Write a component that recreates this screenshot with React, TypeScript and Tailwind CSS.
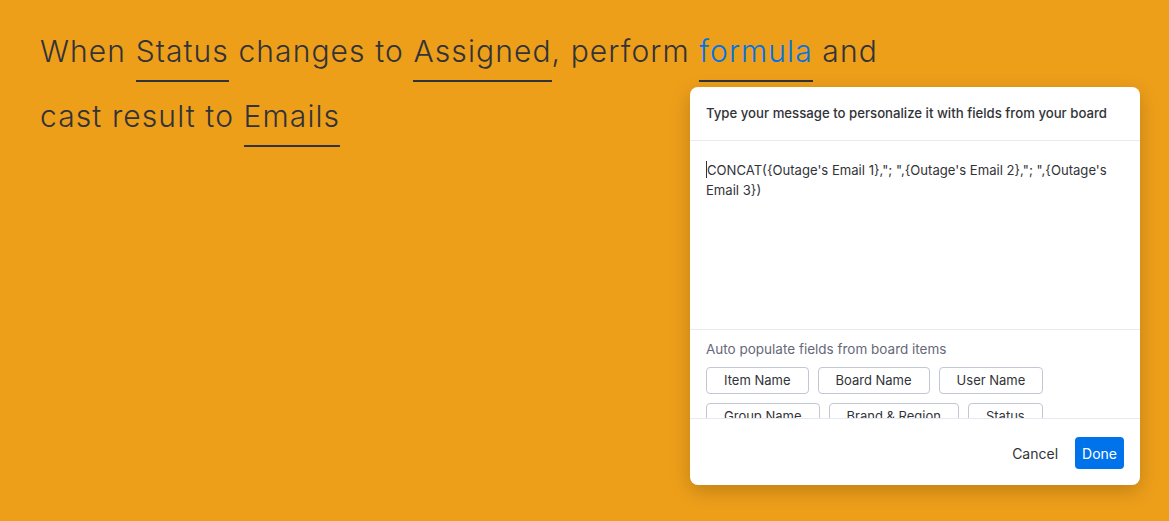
import React from "react";

const U = ({ children, blue }: { children: React.ReactNode; blue?: boolean }) => (
  <span
    className={`inline-block border-b-2 border-[#323338] pb-[9px] ${blue ? "text-[#0073ea]" : ""}`}
  >
    {children}
  </span>
);

const Chip = ({ label }: { label: string }) => (
  <button className="h-[27px] px-[17px] rounded-[4px] border border-[#c3c6d4] bg-white text-[13px] text-[#323338] leading-none whitespace-nowrap">
    {label}
  </button>
);

export default function App() {
  return (
    <div className="relative w-[1169px] h-[521px] bg-[#ee9f1a] overflow-hidden">
      <div
        className="pl-[40px] pt-[31px] text-[30px] font-light text-[#323338] tracking-[1.1px]"
        style={{ fontFamily: "Inter, 'Noto Sans', sans-serif" }}
      >
        <div className="leading-[40px] h-[65px] whitespace-nowrap">
          When <U>Status</U> changes to <U>Assigned</U>, perform <U blue>formula</U> and
        </div>
        <div className="leading-[40px] h-[63px] whitespace-nowrap">
          cast result to <U>Emails</U>
        </div>
      </div>

      <div
        className="absolute left-[690px] top-[87px] w-[450px] h-[398px] bg-white rounded-[8px] shadow-[0_6px_20px_rgba(0,0,0,0.2)] flex flex-col overflow-hidden"
        style={{ fontFamily: "Inter, 'Noto Sans', sans-serif" }}
      >
        <div className="h-[54px] shrink-0 flex items-center px-4 border-b border-[#e6e9ef] text-[13.2px] font-medium text-[#323338]">
          Type your message to personalize it with fields from your board
        </div>
        <div className="h-[189px] shrink-0 px-4 pt-[19px] text-[13.1px] leading-[20px] text-[#323338] border-b border-[#e6e9ef]">
          <span className="inline-block w-px h-[17px] bg-[#323338] align-[-3px]" />
          CONCAT(&#123;Outage's Email 1&#125;,"; ",&#123;Outage's Email 2&#125;,"; ",&#123;Outage's
          Email 3&#125;)
        </div>
        <div className="h-[89px] shrink-0 overflow-hidden px-4 pt-[10px] border-b border-[#e6e9ef]">
          <div className="text-[13.5px] text-[#676879] leading-[18px]">
            Auto populate fields from board items
          </div>
          <div className="mt-[9px] flex flex-wrap gap-[9px] w-[345px]">
            <Chip label="Item Name" />
            <Chip label="Board Name" />
            <Chip label="User Name" />
            <Chip label="Group Name" />
            <Chip label="Brand & Region" />
            <Chip label="Status" />
          </div>
        </div>
        <div className="flex-1 flex items-start justify-end pt-[18px] pr-4 gap-[1px]">
          <button className="h-[32px] px-4 text-[14px] text-[#323338]">Cancel</button>
          <button className="h-[32px] px-[7px] rounded-[4px] bg-[#0073ea] text-white text-[14px]">
            Done
          </button>
        </div>
      </div>
    </div>
  );
}
